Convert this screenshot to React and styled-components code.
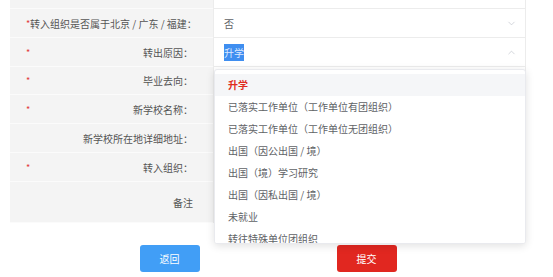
import styled, { createGlobalStyle } from 'styled-components';
import { ChevronDown, ChevronUp } from 'lucide-react';

const Global = createGlobalStyle`
	* { box-sizing: border-box; }
	body {
		margin: 0;
		background: #fff;
		font-family: 'Noto Sans CJK SC', 'Noto Sans', sans-serif;
		font-size: 10px;
		overflow: hidden;
	}
`;

const Page = styled.div`
	width: 553px;
	height: 277px;
	overflow: hidden;
	padding-left: 10px;
`;

const Table = styled.div`
	width: 516px;
	margin-top: -20px;
	display: grid;
	grid-template-columns: 203px 313px;
	border-right: 1px solid #ececec;
`;

const Label = styled.div`
	height: ${(p) => p.h}px;
	background: #f4f4f4;
	border-bottom: 1px solid #fbfbfb;
	display: flex;
	align-items: center;
	padding: 0 20px 0 16px;
	color: #555;
	span.req {
		color: #e23a3a;
		width: 4px;
		font-size: 9px;
	}
	span.text {
		flex: 1;
		text-align: right;
		white-space: nowrap;
	}
`;

const Cell = styled.div`
	height: ${(p) => p.h}px;
	position: relative;
	border-bottom: 1px solid #ececec;
	border-left: 1px solid #ececec;
`;

const Select = styled.div`
	height: 100%;
	display: flex;
	align-items: center;
	justify-content: space-between;
	padding: 0 9px 0 10px;
	color: #606266;
	svg {
		color: #c0c4cc;
	}
`;

const Selected = styled.span`
	background: #3f8ef0;
	color: #dde9ff;
	padding: 1px 0;
`;

const Dropdown = styled.ul`
	position: absolute;
	top: 31px;
	left: 0;
	width: 312px;
	height: 175px;
	margin: 0;
	padding: 4px 0 0;
	list-style: none;
	background: #fff;
	border: 1px solid #e9eaee;
	border-radius: 3px;
	box-shadow: 0 2px 8px rgba(0, 0, 0, 0.12);
	overflow: hidden;
	z-index: 5;
	&::before {
		content: '';
		position: absolute;
		top: -5px;
		left: 24px;
		border: 5px solid transparent;
		border-top: 0;
		border-bottom-color: #fff;
	}
`;

const Item = styled.li`
	height: 22px;
	line-height: 22px;
	padding-left: 13px;
	color: ${(p) => (p.active ? '#e02b20' : '#606266')};
	font-weight: ${(p) => (p.active ? 700 : 400)};
	background: ${(p) => (p.active ? '#f5f6f8' : '#fff')};
	white-space: nowrap;
`;

const Buttons = styled.div`
	width: 516px;
	display: flex;
	justify-content: center;
	gap: 137px;
	margin-top: 22px;
`;

const Button = styled.button`
	width: 60px;
	height: 27px;
	border: 0;
	border-radius: 3px;
	background: ${(p) => (p.red ? '#e12720' : '#419ef6')};
	color: #fff;
	font-family: inherit;
	font-size: 10px;
`;

const options = [
	'升学',
	'已落实工作单位（工作单位有团组织）',
	'已落实工作单位（工作单位无团组织）',
	'出国（因公出国 / 境）',
	'出国（境）学习研究',
	'出国（因私出国 / 境）',
	'未就业',
	'转往特殊单位团组织',
];

function Row({ label, req, h = 29, children }) {
	return (
		<>
			<Label h={h}>
				<span className='req'>{req ? '*' : ''}</span>
				<span className='text'>{label}</span>
			</Label>
			<Cell h={h}>{children}</Cell>
		</>
	);
}

export default function App() {
	return (
		<Page>
			<Global />
			<Table>
				<Row label=''>
					<Select>共青团员</Select>
				</Row>
				<Row label='转入组织是否属于北京 / 广东 / 福建：' req>
					<Select>
						否
						<ChevronDown size={11} strokeWidth={1.5} />
					</Select>
				</Row>
				<Row label='转出原因：' req>
					<Select>
						<Selected>升学</Selected>
						<ChevronUp size={11} strokeWidth={1.5} />
					</Select>
					<Dropdown>
						{options.map((o, i) => (
							<Item key={o} active={i === 0}>
								{o}
							</Item>
						))}
					</Dropdown>
				</Row>
				<Row label='毕业去向：' req h={28} />
				<Row label='新学校名称：' req />
				<Row label='新学校所在地详细地址：' />
				<Row label='转入组织：' req />
				<Row label='备注' h={41} />
			</Table>
			<Buttons>
				<Button>返回</Button>
				<Button red>提交</Button>
			</Buttons>
		</Page>
	);
}
